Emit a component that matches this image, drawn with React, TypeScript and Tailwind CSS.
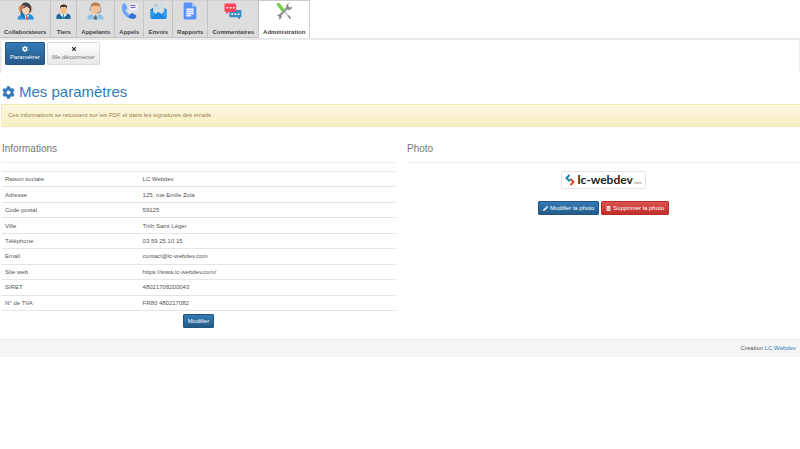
import type { ReactNode } from "react"
import { FaCog, FaPencilAlt, FaTimes, FaTrashAlt } from "react-icons/fa"

const Collaborators = () => (
    <svg viewBox="0 0 34 36" className="h-[18px] w-[17px]" aria-hidden="true">
        <path d="M1 35q0-7 8-10l9-2 8 1q7 3 8 11z" fill="#2490e0" />
        <path d="M8 26q-3-4-1-8l7 2 10 4-5 11z" fill="#1771bd" />
        <path d="m15 25 4 3 4-3 1 2-4 8h-3z" fill="#eef5fa" />
        <path d="M18 28h3l1 7h-5z" fill="#e2564a" />
        <path d="M7 6q-5 1-4 10 1 5 5 6zm21 1q4 2 3 8-1 6-5 8z" fill="#f7a565" />
        <path d="M8 20Q5 8 11 3q6-4 13 0 6 5 4 15l-3 4z" fill="#41434d" />
        <path d="M10 13q6 0 9-4l6 4v5q-2 8-7 8-6-1-8-8z" fill="#ffd2b0" />
        <path d="M9 6 8 20l3-8 7-4z" fill="#f17c57" />
    </svg>
)

const Third = () => (
    <svg viewBox="0 0 30 30" className="h-[15px] w-[15px]" aria-hidden="true">
        <path d="M1 30v-6q1-4 8-5h12q7 1 8 5v6z" fill="#25608c" />
        <path d="m10 18 5 3 5-3 2 3-7 8-7-8z" fill="#eefafa" />
        <path d="M14 21h2l2 9h-6z" fill="#2294cf" />
        <path d="M9 7h12v6q-1 7-6 7t-6-7z" fill="#f7bd84" />
        <path d="M8 10V6q1-6 8-5 6 0 6 5v4l-2-4H10z" fill="#3d302d" />
        <path d="M2 25v5m26-5v5" stroke="#2499cf" strokeWidth="2" />
    </svg>
)

const Caller = () => (
    <svg viewBox="0 0 32 34" className="h-[18px] w-[17px]" aria-hidden="true">
        <path d="M1 33v-4q1-5 9-7h12q8 2 9 7v4z" fill="#8fc0e2" />
        <path d="m10 22 6 11 6-11-2-4h-8z" fill="#f4f7f8" />
        <path d="M14 25h4l1 8h-6z" fill="#536b82" />
        <path d="M8 6h16v9q-1 9-8 9t-8-9z" fill="#f3bf98" />
        <path d="M7 11V7q1-6 9-6t9 6v4l-3-4H10z" fill="#b5804e" />
        <path d="M6 10v7m20-7v6q0 4-7 5" fill="none" stroke="#8b959b" strokeWidth="2" />
    </svg>
)

const Phone = () => (
    <svg viewBox="0 0 34 34" className="h-[18px] w-[17px]" aria-hidden="true">
        <path d="M3 4q4-4 6-1l4 8q0 2-4 4 3 7 9 10l-4 5C5 25-1 12 3 4z" fill="#6ba5fb" />
        <path d="M18 24q3-4 5-3l7 5q2 2-1 5-5 4-15-1z" fill="#2f72dc" />
        <path d="m17 18 1-5-2-5 4-6 8-2 6 5v7l-6 5h-6z" fill="#eeeafa" />
        <path d="M19 6h10M19 10h10" stroke="#6d67cf" strokeWidth="2" />
    </svg>
)

const Envelope = () => (
    <svg viewBox="0 0 34 34" className="h-[18px] w-[17px]" aria-hidden="true">
        <path d="m1 14 4-3h24l4 3v17H1z" fill="#1874ca" />
        <path d="M6 8 14 0h15v26H6z" fill="#d1dde0" />
        <path d="M6 8h8V0z" fill="#b2c6ca" />
        <path d="m1 14 12 10h8l12-10v16q0 3-3 3H4q-3 0-3-3z" fill="#29a0f3" />
        <path d="m2 32 13-12q2-1 4 0l13 12-2 1H4z" fill="#1d87e1" />
    </svg>
)

const Report = () => (
    <svg viewBox="0 0 26 34" className="h-[18px] w-[14px]" aria-hidden="true">
        <path d="M4 1h13l8 8v21q0 3-3 3H4q-3 0-3-3V4q0-3 3-3z" fill="#5a91f6" />
        <path d="M17 1v8h8z" fill="#a9c8ff" />
        <path d="M6 14h14M6 18h14M6 22h14M6 26h9" stroke="#f3f6ff" strokeWidth="3" />
    </svg>
)

const Comments = () => (
    <svg viewBox="0 0 34 32" className="h-[17px] w-[18px]" aria-hidden="true">
        <path d="M12 13h19q2 0 2 2v10q0 2-2 2h-1v4l-5-4H12q-2 0-2-2V15q0-2 2-2z" fill="#3191cd" />
        <path d="M3 1h18q2 0 2 2v12q0 2-2 2H9l-5 4v-4H3q-2 0-2-2V3q0-2 2-2z" fill="#ff455e" />
        <path d="M5 9h3m3 0h3m3 0h3" stroke="#fff" strokeWidth="3" />
        <path d="M14 21h3m3 0h3m3 0h3" stroke="#fff" strokeWidth="3" />
    </svg>
)

const Tools = () => (
    <svg viewBox="0 0 32 36" className="h-[18px] w-[16px]" aria-hidden="true">
        <path d="M24 10 7 28" stroke="#8c8c8c" strokeWidth="4" />
        <path d="m26 2-2 5 3 4 5-2q0 6-5 7-6 1-7-4-1-7 6-10zM1 28q3-5 8-3 4 4 1 8l-5 2 2-5-3-3z" fill="#8c8c8c" />
        <path d="m14 15 15 18" stroke="#999" strokeWidth="2" />
        <path d="M5 5 13 15" stroke="#70d04c" strokeWidth="7" strokeLinecap="round" />
        <path d="m24 27 5 6" stroke="#888" strokeWidth="3" />
    </svg>
)

interface Tab {
    label: string
    icon: ReactNode
    active?: boolean
}

const tabs: Tab[] = [
    { label: "Collaborateurs", icon: <Collaborators /> },
    { label: "Tiers", icon: <Third /> },
    { label: "Appelants", icon: <Caller /> },
    { label: "Appels", icon: <Phone /> },
    { label: "Envois", icon: <Envelope /> },
    { label: "Rapports", icon: <Report /> },
    { label: "Commentaires", icon: <Comments /> },
    { label: "Administration", icon: <Tools />, active: true },
]

const rows = [
    ["Raison sociale", "LC Webdev"],
    ["Adresse", "125, rue Emile Zola"],
    ["Code postal", "59125"],
    ["Ville", "Trith Saint Léger"],
    ["Téléphone", "03 59 25 10 15"],
    ["Email", "contact@lc-webdev.com"],
    ["Site web", "https://www.lc-webdev.com/"],
    ["SIRET", "48021708200043"],
    ["N° de TVA", "FR80 480217082"],
]

const blue = "border-[#245580] bg-linear-to-b from-[#337ab7] to-[#265a88] text-white"
const red = "border-[#b92c28] bg-linear-to-b from-[#d9534f] to-[#c12e2a] text-white"
const light = "border-[#dcdcdc] bg-linear-to-b from-white to-[#e8e8e8] text-[#777]"

interface ButtonProps {
    tone: string
    stacked?: boolean
    icon?: ReactNode
    children: ReactNode
}

const Button = ({ tone, stacked, icon, children }: ButtonProps) => (
    <button
        type="button"
        className={`flex items-center justify-center rounded-[1px] border px-1 whitespace-nowrap ${stacked ? "h-[23px] flex-col gap-px" : "h-[14px] gap-[2px]"} ${tone}`}
    >
        {icon}
        <span className="leading-[8px]">{children}</span>
    </button>
)

const Logo = () => (
    <div className="flex h-[18px] items-center rounded-[1px] border border-[#e5e5e5] px-[3px]">
        <svg viewBox="0 0 20 24" className="mr-[2px] h-[12px] w-[10px]" aria-hidden="true">
            <path d="M9 2 3 8l6 6" fill="none" stroke="#168ab5" strokeWidth="4" />
            <path d="m11 10 6 6-6 6" fill="none" stroke="#e34d2d" strokeWidth="4" />
            <path d="m7 12 3 3M10 9l3 3" stroke="#174859" strokeWidth="2" />
        </svg>
        <span className="font-['Lato',sans-serif] text-[12px] leading-[12px] font-bold text-[#222]">lc-webdev</span>
        <span className="self-end pb-[3px] text-[4px] leading-[4px] text-[#777]">.com</span>
    </div>
)

const App = () => (
    <div className="bg-white font-['Liberation_Sans',Arial,sans-serif] text-[6px] leading-[8px] text-[#555]">
        <nav className="flex h-[38px] bg-white">
            {tabs.map(({ label, icon, active }) => (
                <a
                    key={label}
                    href="#"
                    aria-current={active ? "page" : undefined}
                    className={`flex min-w-[26px] flex-col items-center justify-between border-t border-r px-1 pt-px font-bold whitespace-nowrap text-[#444] ${active ? "border-[#ccc] bg-white pb-[2px]" : "border-t-[#d2d2d2] border-r-[#c5c5c5] border-b border-b-[#c5c5c5] bg-[#ddd] pb-px"}`}
                >
                    <span className="flex h-[18px] items-center">{icon}</span>
                    <span>{label}</span>
                </a>
            ))}
        </nav>
        <div className="flex h-[35px] gap-[2px] border-t-2 border-r border-l-2 border-x-[#eee] border-t-[#e9e9e9] px-[3px] pt-[2px]">
            <Button tone={blue} stacked icon={<FaCog className="size-[6px]" />}>Paramétrer</Button>
            <Button tone={light} stacked icon={<FaTimes className="size-[6px] text-[#222]" />}>Me déconnecter</Button>
        </div>

        <main>
            <h1 className="flex items-center gap-1 px-[2px] pt-[10px] pb-[3px] text-[15px] leading-[18px] text-[#337ab7]">
                <FaCog className="size-[13px]" />
                Mes paramètres
            </h1>
            <p className="ml-px rounded-l-[2px] border border-r-0 border-[#f5e9b8] bg-linear-to-b from-[#fcf8e3] to-[#f8efc0] px-[6px] pt-[6px] pb-[7px] text-[#9a8050]">
                Ces informations se retouvent sur les PDF et dans les signatures des emails
            </p>

            <div className="grid grid-cols-2 gap-3 pt-4 pl-[2px]">
                <section>
                    <h2 className="border-b border-[#eee] pb-[7px] text-[10px] leading-[12px] text-[#777]">Informations</h2>
                    <table className="mt-2 h-[140px] w-full border-collapse text-left">
                        <tbody>
                            {rows.map(([label, value]) => (
                                <tr key={label} className="border-y border-[#e4e4e4]">
                                    <th scope="row" className="w-[35%] px-[3px] font-normal">{label}</th>
                                    <td className="px-[3px]">{value}</td>
                                </tr>
                            ))}
                        </tbody>
                    </table>
                    <div className="flex justify-center pt-[3px]">
                        <Button tone={blue}>Modifier</Button>
                    </div>
                </section>
                <section>
                    <h2 className="border-b border-[#eee] pb-[7px] text-[10px] leading-[12px] text-[#777]">Photo</h2>
                    <div className="flex flex-col items-center gap-3 pt-2">
                        <Logo />
                        <div className="flex gap-[2px]">
                            <Button tone={blue} icon={<FaPencilAlt className="size-[5px]" />}>Modifier la photo</Button>
                            <Button tone={red} icon={<FaTrashAlt className="size-[5px]" />}>Supprimer la photo</Button>
                        </div>
                    </div>
                </section>
            </div>
        </main>

        <footer className="mt-[11px] border-t border-[#e9e9e9] bg-[#f5f5f5] px-1 pt-1 pb-[5px] text-right">
            Création <a href="#" className="text-[#337ab7]">LC Webdev</a>
        </footer>
    </div>
)

export default App
